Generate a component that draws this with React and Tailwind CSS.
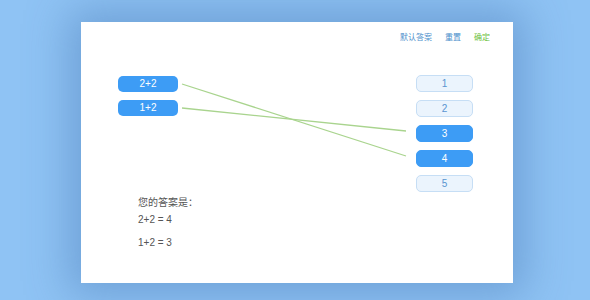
import React from 'react';

const leftItems = ['2+2', '1+2'];
const rightItems = [
  { label: '1', active: false },
  { label: '2', active: false },
  { label: '3', active: true },
  { label: '4', active: true },
  { label: '5', active: false },
];

export default function App() {
  return (
    <div
      className="w-[590px] h-[300px] overflow-hidden bg-[#8fc3f4] pt-[22px] pl-[81px]"
      style={{ fontFamily: '"Liberation Sans", Arial, "Noto Sans CJK SC", sans-serif' }}
    >
      <div className="relative w-[432px] h-[261px] bg-white shadow-[0_0_40px_12px_rgba(70,120,180,0.45)]">
        {/* connection lines */}
        <svg className="absolute inset-0 pointer-events-none" width="432" height="261">
          <line x1="101" y1="62" x2="325" y2="134" stroke="#a9d48e" strokeWidth="1.3" />
          <line x1="101" y1="86" x2="325" y2="109" stroke="#a9d48e" strokeWidth="1.3" />
        </svg>

        <div className="flex justify-end gap-[13px] pt-[10px] pr-[23px] text-[8px] leading-[11px]">
          <span className="text-[#4d8fcc]">默认答案</span>
          <span className="text-[#4d8fcc]">重置</span>
          <span className="text-[#6cbf3c]">确定</span>
        </div>

        <div className="flex justify-between pl-[37px] pr-[40px] mt-[32px]">
          <div className="flex flex-col gap-[8px] pt-[1px]">
            {leftItems.map((item) => (
              <div
                key={item}
                className="w-[60px] h-[16px] rounded-[5px] bg-[#3d9cf5] text-white text-[10px] leading-[16px] text-center"
              >
                {item}
              </div>
            ))}
          </div>
          <div className="flex flex-col gap-[8px]">
            {rightItems.map((item) => (
              <div
                key={item.label}
                className={
                  item.active
                    ? 'w-[57px] h-[17px] rounded-[5px] bg-[#3d9cf5] border border-[#3d9cf5] text-white text-[10px] leading-[15px] text-center'
                    : 'w-[57px] h-[17px] rounded-[5px] bg-[#ebf4fd] border border-[#c6def5] text-[#5a95d0] text-[10px] leading-[15px] text-center'
                }
              >
                {item.label}
              </div>
            ))}
          </div>
        </div>

        <div className="absolute left-[57px] top-[174px] text-[10px] text-[#555] leading-[14px]">
          <div>您的答案是：</div>
          <div className="mt-[3px]">2+2 = 4</div>
          <div className="mt-[9px]">1+2 = 3</div>
        </div>
      </div>
    </div>
  );
}
